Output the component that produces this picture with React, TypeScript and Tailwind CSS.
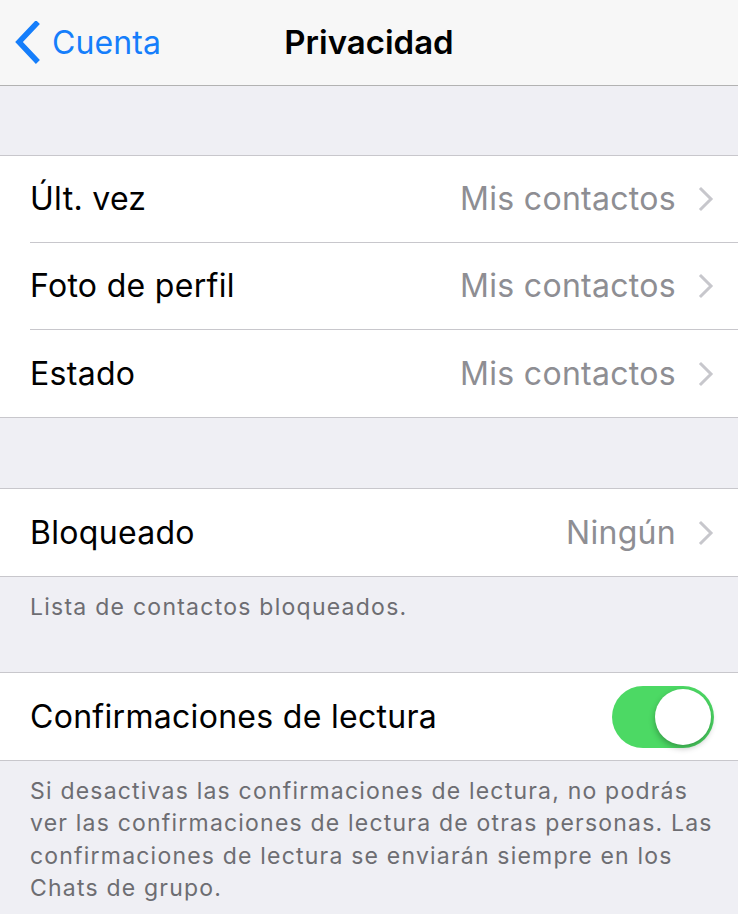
import React, { useState } from "react"

const font = { fontFamily: "Inter, 'Noto Sans', sans-serif" }

const Chevron = () => (
  <svg width="16" height="26" viewBox="0 0 16 26" className="ml-[22px] shrink-0">
    <path d="M3 3 L13 13 L3 23" fill="none" stroke="#c7c7cc" strokeWidth="3" strokeLinecap="square" />
  </svg>
)

interface RowProps {
  label: string
  value?: string
  last?: boolean
  children?: React.ReactNode
}

const Row: React.FC<RowProps> = ({ label, value, last, children }) => (
  <div className="pl-[30px] bg-white">
    <div className={`h-[87px] flex items-center pr-[24px] ${last ? "" : "border-b border-[#c8c7cc]"}`}>
      <span className="flex-1 text-[32px] text-black tracking-[0.3px]">{label}</span>
      {value && <span className="text-[32px] text-[#8e8e93] tracking-[0.3px]">{value}</span>}
      {value && <Chevron />}
      {children}
    </div>
  </div>
)

const Toggle = ({ on, onChange }: { on: boolean; onChange: () => void }) => (
  <button
    onClick={onChange}
    className={`relative w-[102px] h-[62px] rounded-full transition-colors ${on ? "bg-[#4cd964]" : "bg-[#e5e5ea]"}`}
  >
    <span
      className={`absolute top-[3px] w-[56px] h-[56px] rounded-full bg-white shadow-[0_3px_6px_rgba(0,0,0,0.3)] transition-all ${on ? "left-[43px]" : "left-[3px]"}`}
    />
  </button>
)

export default function App() {
  const [readReceipts, setReadReceipts] = useState(true)

  return (
    <div className="w-[738px] h-[914px] bg-[#efeff4] overflow-hidden" style={font}>
      {/* Nav bar */}
      <div className="relative h-[86px] bg-[#f7f7f7] border-b border-[#b2b2b2] flex items-center">
        <div className="flex items-center pl-[14px] text-[#157efb]">
          <svg width="26" height="44" viewBox="0 0 26 44">
            <path d="M22 3 L5 21 L22 39" fill="none" stroke="#157efb" strokeWidth="5.5" strokeLinecap="square" />
          </svg>
          <span className="ml-[12px] text-[32px] tracking-[0.1px]">Cuenta</span>
        </div>
        <span className="absolute left-0 right-0 text-center text-[33px] font-semibold text-black tracking-[0px] pointer-events-none">
          Privacidad
        </span>
      </div>

      <div className="h-[69px]" />

      <div className="border-y border-[#c8c7cc]">
        <Row label="Últ. vez" value="Mis contactos" />
        <Row label="Foto de perfil" value="Mis contactos" />
        <Row label="Estado" value="Mis contactos" last />
      </div>

      <div className="h-[70px]" />

      <div className="border-y border-[#c8c7cc]">
        <Row label="Bloqueado" value="Ningún" last />
      </div>

      <div className="h-[95px] px-[30px] pt-[14px] text-[23px] leading-[32px] tracking-[1.25px] text-[#6d6d72]">
        Lista de contactos bloqueados.
      </div>

      <div className="border-y border-[#c8c7cc]">
        <Row label="Confirmaciones de lectura" last>
          <Toggle on={readReceipts} onChange={() => setReadReceipts(!readReceipts)} />
        </Row>
      </div>

      <div className="px-[30px] pt-[14px] text-[23px] leading-[32.3px] text-[#6d6d72] tracking-[1.2px] whitespace-nowrap">
        Si desactivas las confirmaciones de lectura, no podrás
        <br />
        ver las confirmaciones de lectura de otras personas. Las
        <br />
        confirmaciones de lectura se enviarán siempre en los
        <br />
        Chats de grupo.
      </div>
    </div>
  )
}
